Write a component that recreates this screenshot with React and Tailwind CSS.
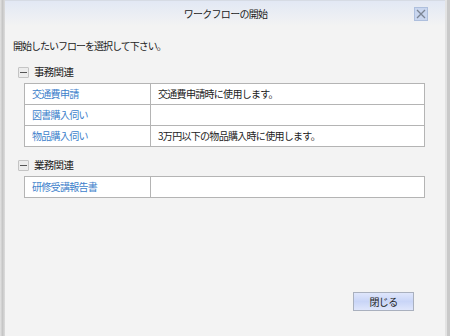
const sections = [
  {
    name: '事務関連',
    flows: [
      { name: '交通費申請', note: '交通費申請時に使用します。' },
      { name: '図書購入伺い', note: '' },
      { name: '物品購入伺い', note: '3万円以下の物品購入時に使用します。' },
    ],
  },
  {
    name: '業務関連',
    flows: [{ name: '研修受講報告書', note: '' }],
  },
]

const MinusBox = () => (
  <span className="w-[11px] h-[11px] flex items-center justify-center border border-[#c4c4c4] bg-[#ececec] rounded-[1px]">
    <span className="w-[7px] h-px bg-[#555]" />
  </span>
)

const Section = ({ section }) => (
  <div>
    <div className="flex items-center gap-[5px] pl-[13px] h-[12px]">
      <MinusBox />
      <span className="text-[10.5px] text-[#222] leading-none">{section.name}</span>
    </div>
    <table className="ml-[19px] mt-[5px] w-[401px] border-collapse bg-white text-[10px]">
      <tbody>
        {section.flows.map((f) => (
          <tr key={f.name} className="h-[21px]">
            <td className="w-[126px] border border-[#b4b4b4] pl-[7px] text-[#3d7fcb] leading-none">{f.name}</td>
            <td className="border border-[#b4b4b4] pl-[7px] text-[#222] leading-none">{f.note}</td>
          </tr>
        ))}
      </tbody>
    </table>
  </div>
)

export default function App() {
  return (
    <div className="w-[450px] h-[336px] flex bg-[#f3f3f3] overflow-hidden font-['Noto_Sans_CJK_JP','MS_UI_Gothic',sans-serif] tracking-[-0.7px]">
      {/* left frame */}
      <div className="w-[5px] h-full bg-linear-to-r from-[#e4e4e4] via-[#c6c6c6] to-[#dcdcdc]" />
      <div className="flex-1 flex flex-col border-t border-[#d6dbe4]">
        {/* title bar */}
        <div className="h-[25px] flex items-center relative bg-linear-to-b from-[#e2e8f4] to-[#f3f3f3]">
          <span className="flex-1 text-center text-[10px] text-[#222] pl-[1px]">ワークフローの開始</span>
          <span className="absolute left-[409px] top-[6px] w-[14px] h-[14px] flex items-center justify-center bg-[#c9d6ef] border border-[#aebfdd]">
            <svg width="10" height="10" viewBox="0 0 10 10">
              <path d="M1 1L9 9M9 1L1 9" stroke="#7b8594" strokeWidth="1.3" />
            </svg>
          </span>
        </div>
        <p className="mt-[15px] pl-[8px] text-[10px] tracking-[-1px] text-[#222] leading-none">開始したいフローを選択して下さい。</p>
        <div className="mt-[15px] flex flex-col gap-[12px]">
          {sections.map((s) => (
            <Section key={s.name} section={s} />
          ))}
        </div>
        <div className="mt-auto mb-[25px] flex justify-end pr-[31px]">
          <button className="w-[61px] h-[19px] border border-[#a9b0be] bg-linear-to-b from-[#dfe6fb] via-[#c9d5f7] to-[#dfe6fb] text-[10px] text-[#222] leading-none">
            閉じる
          </button>
        </div>
      </div>
      {/* right frame */}
      <div className="w-[5px] h-full flex">
        <div className="w-[2px] bg-[#e3e3e3]" />
        <div className="w-[3px] bg-[#c9c9c9]" />
      </div>
    </div>
  )
}
